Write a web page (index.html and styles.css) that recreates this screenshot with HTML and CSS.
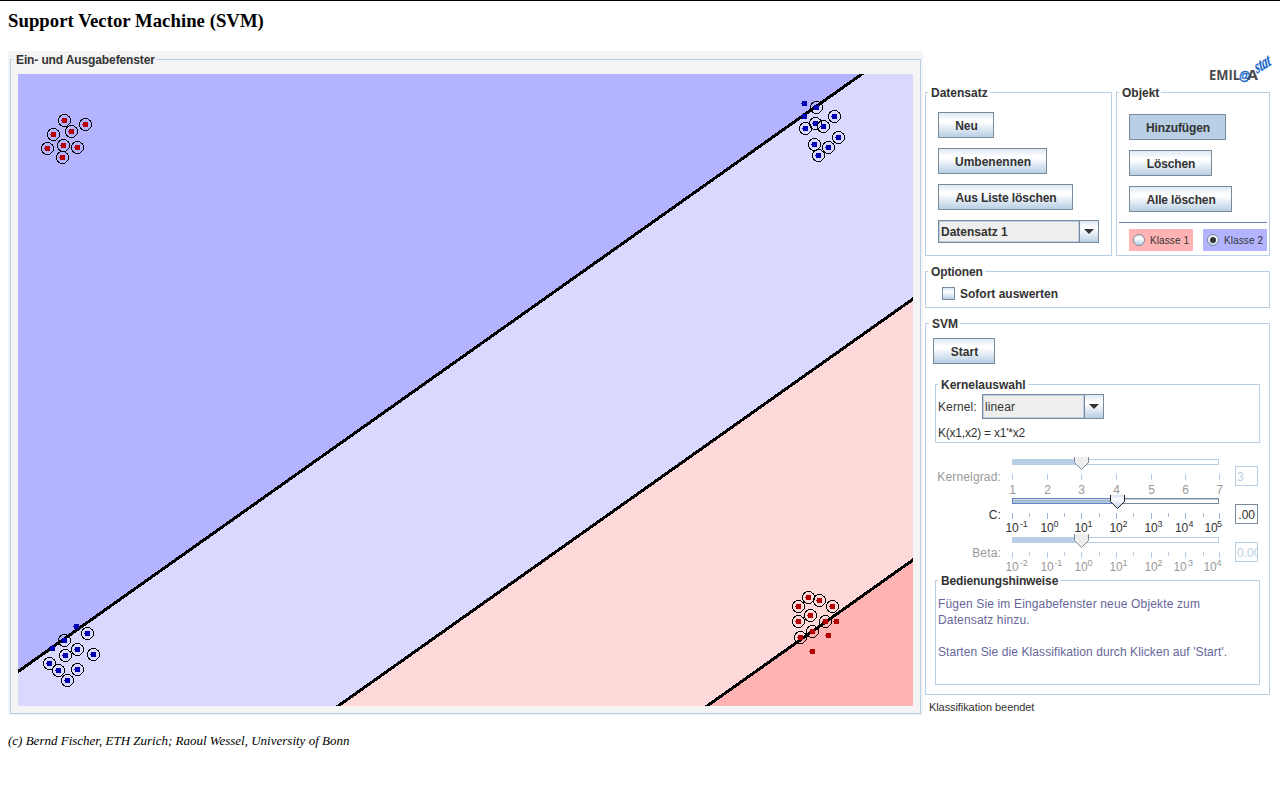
FILE: index.html
```html
<!DOCTYPE html>
<html lang="de">
<head>
<meta charset="utf-8">
<title>Support Vector Machine (SVM)</title>
<link rel="stylesheet" href="styles.css">
</head>
<body>
<h3 class="title">Support Vector Machine (SVM)</h3>
<main class="app">
  <section class="io">
    <div class="group io-group">
      <span class="legend tight">Ein- und Ausgabefenster</span>
      <svg class="plot" viewBox="18 74 895 632" width="895" height="632" shape-rendering="crispEdges">
        <defs>
          <g id="dot"><rect x="-2" y="-2" width="5" height="5"/><rect x="-3" y="0" width="1" height="1"/></g>
          <g id="sv"><circle cx=".5" cy=".5" r="6" fill="none" stroke="#000"/><use href="#dot"/></g>
        </defs>
        <rect x="18" y="74" width="895" height="632" fill="#d9d9ff"/>
        <path d="M18 74H862L18 672Z" fill="#b3b3ff"/>
        <path d="M913 299V706H338Z" fill="#ffd9d9"/>
        <path d="M913 560V706H707Z" fill="#ffb3b3"/>
        <path d="M16 673L864 72.500M336 707.500L915 297.500M705 707.500L915 558.500" stroke="#000" stroke-width="3" fill="none"/>
        <g fill="#b30000">
          <use href="#sv" x="64" y="120"/><use href="#sv" x="85" y="124"/><use href="#sv" x="53" y="134"/><use href="#sv" x="71" y="131"/>
          <use href="#sv" x="47" y="148"/><use href="#sv" x="63" y="145"/><use href="#sv" x="77" y="147"/><use href="#sv" x="62" y="157"/>
          <use href="#sv" x="808" y="597"/><use href="#sv" x="819" y="600"/><use href="#sv" x="798" y="606"/><use href="#sv" x="832" y="606"/>
          <use href="#sv" x="810" y="615"/><use href="#sv" x="798" y="621"/><use href="#sv" x="825" y="621"/><use href="#dot" x="836" y="621"/>
          <use href="#sv" x="812" y="631"/><use href="#sv" x="800" y="637"/><use href="#dot" x="828" y="635"/><use href="#dot" x="812" y="651"/>
        </g>
        <g fill="#0000b3">
          <use href="#dot" x="804" y="103"/><use href="#sv" x="816" y="107"/><use href="#dot" x="804" y="116"/><use href="#sv" x="834" y="116"/>
          <use href="#sv" x="805" y="128"/><use href="#sv" x="815" y="123"/><use href="#sv" x="823" y="126"/><use href="#sv" x="838" y="137"/>
          <use href="#sv" x="814" y="144"/><use href="#sv" x="828" y="147"/><use href="#sv" x="818" y="155"/>
          <use href="#dot" x="76" y="626"/><use href="#sv" x="87" y="633"/><use href="#sv" x="64" y="640"/><use href="#dot" x="52" y="648"/>
          <use href="#sv" x="77" y="649"/><use href="#sv" x="65" y="655"/><use href="#sv" x="93" y="654"/><use href="#sv" x="49" y="663"/>
          <use href="#sv" x="58" y="670"/><use href="#sv" x="77" y="669"/><use href="#sv" x="67" y="680"/>
        </g>
      </svg>
    </div>
  </section>

  <section class="controls">
    <header class="brand">
      <svg viewBox="1205 50 70 36" width="70" height="36">
        <g font-family="Open Sans, sans-serif" font-weight="bold" font-size="14" fill="#4a4a4c">
          <text x="1209" y="79" textLength="31" lengthAdjust="spacingAndGlyphs">EMIL</text>
          <text x="1247" y="79" textLength="11" lengthAdjust="spacingAndGlyphs">A</text>
        </g>
        <text x="1239" y="79" font-family="Liberation Sans, sans-serif" font-weight="bold" font-style="italic" font-size="13" fill="#1565c8" stroke="#1565c8" stroke-width=".4" textLength="11" lengthAdjust="spacingAndGlyphs">@</text>
        <text transform="translate(1257 72.500) rotate(-31) skewX(-12) scale(.8 1.1)" font-family="Liberation Serif, serif" font-style="italic" font-weight="bold" font-size="16" fill="#1565c8" stroke="#1565c8" stroke-width=".3" textLength="21" lengthAdjust="spacingAndGlyphs">stat</text>
      </svg>
    </header>

    <div class="top-row">
      <div class="group dataset">
        <span class="legend">Datensatz</span>
        <button class="btn b-neu">Neu</button>
        <button class="btn b-um">Umbenennen</button>
        <button class="btn b-aus">Aus Liste löschen</button>
        <div class="combo combo-data"><span class="combo-value">Datensatz 1</span><span class="combo-arrow"><svg width="10" height="5" viewBox="0 0 10 5"><path d="M0 0H10L5 5Z" fill="#333"/></svg></span></div>
      </div>
      <div class="group object">
        <span class="legend">Objekt</span>
        <button class="btn b-hin pressed">Hinzufügen</button>
        <button class="btn b-loe">Löschen</button>
        <button class="btn b-alle">Alle löschen</button>
        <div class="sep"></div>
        <div class="classes">
          <label class="class-opt c1"><span class="radio"></span><span class="class-name">Klasse 1</span></label>
          <label class="class-opt c2"><span class="radio on"></span><span class="class-name">Klasse 2</span></label>
        </div>
      </div>
    </div>

    <div class="group options">
      <span class="legend tight">Optionen</span>
      <label class="check"><span class="box"></span><span class="check-text">Sofort auswerten</span></label>
    </div>

    <div class="group svm">
      <span class="legend">SVM</span>
      <button class="btn b-start">Start</button>
      <div class="group kernel">
        <span class="legend">Kernelauswahl</span>
        <div class="kernel-row"><span class="kernel-label">Kernel:</span><div class="combo combo-kernel"><span class="combo-value">linear</span><span class="combo-arrow"><svg width="10" height="5" viewBox="0 0 10 5"><path d="M0 0H10L5 5Z" fill="#333"/></svg></span></div></div>
        <div class="formula">K(x1,x2) = x1'*x2</div>
      </div>

      <div class="sliders">
        <div class="slider-row off">
          <span class="slider-label">Kernelgrad:</span>
          <svg class="slider" viewBox="1002 457 228 38" width="228" height="38">
            <g shape-rendering="crispEdges">
              <rect x="1012.500" y="459.500" width="206" height="5" fill="#fff" stroke="#b8cfe5"/>
              <rect x="1012" y="459" width="64" height="5" fill="#b8cfe5"/>
              <path d="M1012.500 474v6M1047.500 474v6M1081.500 474v6M1116.500 474v6M1151.500 474v6M1185.500 474v6M1219.500 474v6" stroke="#b8cfe5"/>
            </g>
            <path d="M1074.500 457V462.500L1081.500 469.500L1088.500 462.500V457" fill="#eee" stroke="#7a8a99"/>
            <g class="tick-label"><text x="1012.500" y="494">1</text><text x="1047.500" y="494">2</text><text x="1081.500" y="494">3</text><text x="1116.500" y="494">4</text><text x="1151.500" y="494">5</text><text x="1185.500" y="494">6</text><text x="1219.500" y="494">7</text></g>
          </svg>
          <span class="field">3</span>
        </div>
        <div class="slider-row">
          <span class="slider-label">C:</span>
          <svg class="slider" viewBox="1002 495 228 38" width="228" height="38">
            <defs>
              <linearGradient id="fill" x2="0" y2="1"><stop offset="0" stop-color="#fff"/><stop offset=".4" stop-color="#a3b8cc"/><stop offset="1" stop-color="#b8cfe5"/></linearGradient>
              <linearGradient id="thumb" x2="0" y2="1"><stop offset="0" stop-color="#d0e0f0"/><stop offset=".3" stop-color="#fff"/><stop offset="1" stop-color="#b8cfe5"/></linearGradient>
            </defs>
            <g shape-rendering="crispEdges">
              <rect x="1012.500" y="498.500" width="206" height="5" fill="#fff" stroke="#7a8a99"/>
              <path d="M1013 499.500H1218" stroke="#b8cfe5"/>
              <rect x="1012.500" y="498.500" width="100" height="5" fill="url(#fill)" stroke="#6382bf"/>
              <path d="M1012.500 513v6M1047.500 513v6M1081.500 513v6M1116.500 513v6M1151.500 513v6M1185.500 513v6M1219.500 513v6M1029.500 513v4M1064.500 513v4M1099.500 513v4M1133.500 513v4M1168.500 513v4M1203.500 513v4" stroke="#a3b8cc"/>
            </g>
            <path d="M1110.500 495V501.500L1117.500 508.500L1124.500 501.500V495" fill="url(#thumb)" stroke="#222"/>
            <g class="pow"><text x="1005.500" y="532">10<tspan dx="1.500" dy="-5">-1</tspan></text><text x="1040.500" y="532">10<tspan dy="-5">0</tspan></text><text x="1074.500" y="532">10<tspan dy="-5">1</tspan></text><text x="1109.500" y="532">10<tspan dy="-5">2</tspan></text><text x="1144.500" y="532">10<tspan dy="-5">3</tspan></text><text x="1175" y="532">10<tspan dx=".5" dy="-5">4</tspan></text><text x="1204.500" y="532">10<tspan dx="-.5" dy="-5">5</tspan></text></g>
          </svg>
          <span class="field"><span>.00</span></span>
        </div>
        <div class="slider-row off">
          <span class="slider-label">Beta:</span>
          <svg class="slider" viewBox="1002 533 228 38" width="228" height="38">
            <g shape-rendering="crispEdges">
              <rect x="1012.500" y="537.500" width="206" height="5" fill="#fff" stroke="#b8cfe5"/>
              <rect x="1012" y="537" width="64" height="5" fill="#b8cfe5"/>
              <path d="M1012.500 552v6M1047.500 552v6M1081.500 552v6M1116.500 552v6M1151.500 552v6M1185.500 552v6M1219.500 552v6M1029.500 552v4M1064.500 552v4M1099.500 552v4M1133.500 552v4M1168.500 552v4M1203.500 552v4" stroke="#b8cfe5"/>
            </g>
            <path d="M1074.500 534V540.500L1081.500 547.500L1088.500 540.500V534" fill="#eee" stroke="#7a8a99"/>
            <g class="pow"><text x="1005.500" y="571">10<tspan dx="1.500" dy="-5">-2</tspan></text><text x="1040.500" y="571">10<tspan dx="1" dy="-5">-1</tspan></text><text x="1074.500" y="571">10<tspan dy="-5">0</tspan></text><text x="1109.500" y="571">10<tspan dy="-5">1</tspan></text><text x="1144.500" y="571">10<tspan dy="-5">2</tspan></text><text x="1173.500" y="571">10<tspan dx="1.500" dy="-5">3</tspan></text><text x="1203.500" y="571">10<tspan dy="-5">4</tspan></text></g>
          </svg>
          <span class="field">0.00</span>
        </div>
      </div>

      <div class="group hints">
        <span class="legend tight">Bedienungshinweise</span>
        <p class="hint hint-add">Fügen Sie im Eingabefenster neue Objekte zum<br>Datensatz hinzu.</p>
        <p class="hint">Starten Sie die Klassifikation durch Klicken auf 'Start'.</p>
      </div>
    </div>
    <div class="status">Klassifikation beendet</div>
  </section>
</main>
<footer class="copyright">(c) Bernd Fischer, ETH Zurich; Raoul Wessel, University of Bonn</footer>
</body>
</html>
```
FILE: styles.css
```css
* { box-sizing: border-box; }
html { background: #fff; }
body {
  margin: 0;
  height: 800px;
  padding: 0 8px;
  border-top: 1px solid #000;
  font: 12px/14px "Liberation Sans", Arial, sans-serif;
  color: #333;
  overflow: hidden;
}
.title {
  margin: 0;
  height: 50px;
  padding-top: 9px;
  font: bold 18.72px/22px "Liberation Serif", "Times New Roman", serif;
  letter-spacing: .04px;
  color: #000;
}
.app { display: flex; height: 664px; }

.group { display: flex; flex-direction: column; align-items: flex-start; border: 1px solid #b8cfe5; }
.legend {
  flex: none;
  height: 14px;
  margin: -8px 0 0 2px;
  padding: 0 2px 0 3px;
  background: #fff;
  font-weight: bold;
  line-height: 16px;
  white-space: nowrap;
}
.tight { letter-spacing: -.12px; }

.io { width: 915px; padding: 8px 2px 1px; background: #f4f4f4; }
.io-group { height: 655px; width: 911px; }
.io .legend { background: #f4f4f4; }
.plot { display: block; margin: 8px 0 0 7px; }

.controls { width: 345px; margin-left: 2px; display: flex; flex-direction: column; }
.brand { height: 41px; flex: none; display: flex; justify-content: flex-end; margin-right: -5px; }
.top-row { display: flex; gap: 4px; height: 164px; flex: none; }
.dataset { width: 187px; }
.object { width: 154px; }

.btn {
  flex: none;
  height: 26px;
  margin: 0 0 10px 12px;
  padding: 2px 0 0 1px;
  border: 1px solid #7a8a99;
  border-radius: 0;
  background: linear-gradient(#dde8f3, #fff 30%, #fff 38%, #b8cfe5);
  font: bold 12px/22px "Liberation Sans", Arial, sans-serif;
  color: #333;
  white-space: nowrap;
}
.pressed { background: #b8cfe5; }
.b-neu { width: 56px; margin-top: 13px; }
.b-um { width: 109px; }
.b-aus { width: 135px; letter-spacing: -.09px; }
.b-hin { width: 97px; margin-top: 15px; letter-spacing: -.15px; }
.b-loe { width: 83px; letter-spacing: -.1px; }
.b-alle { width: 103px; letter-spacing: -.12px; }
.b-start { width: 62px; margin: 8px 0 20px 7px; }

.combo { display: flex; flex: none; border: 1px solid #7a8a99; background: #eee; }
.combo-value { flex: 1; border: 1px solid #b8cfe5; padding-left: 1px; }
.combo-arrow {
  width: 19px;
  border-left: 1px solid #7a8a99;
  background: linear-gradient(#dde8f3, #fff 30%, #fff 38%, #b8cfe5);
  display: flex;
  align-items: center;
  justify-content: center;
}
.combo-data { width: 161px; height: 23px; margin-left: 12px; font-weight: bold; line-height: 20px; }
.combo-kernel { width: 122px; height: 25px; line-height: 22px; letter-spacing: .12px; }

.sep { width: 148px; height: 1px; background: #6382bf; flex: none; margin-left: 2px; }
.classes { display: flex; gap: 10px; margin: 6px 0 0 12px; }
.class-opt {
  display: flex;
  align-items: center;
  width: 64px;
  height: 22px;
  padding-left: 4px;
  gap: 5px;
  font-size: 10px;
  white-space: nowrap;
}
.class-name { padding-top: 2px; letter-spacing: .1px; }
.c1 { background: #ffb3b3; }
.c2 { background: #b3b3ff; }
.radio {
  width: 12px;
  height: 12px;
  flex: none;
  border: 1px solid #7a8a99;
  border-radius: 50%;
  background: linear-gradient(#dde8f3, #fff 35%, #b8cfe5);
  display: flex;
  align-items: center;
  justify-content: center;
}
.radio.on::after { content: ""; width: 6px; height: 6px; border-radius: 50%; background: #333; }

.options { height: 37px; flex: none; margin-top: 15px; }
.check { display: flex; align-items: center; gap: 5px; height: 14px; margin: 8px 0 0 16px; font-weight: bold; }
.check-text { padding-top: 2px; }
.box { width: 13px; height: 13px; border: 1px solid #7a8a99; background: linear-gradient(#dde8f3, #fff 35%, #b8cfe5); }

.svm { height: 372px; flex: none; margin-top: 15px; }
.svm > .legend { margin-left: 3px; }
.kernel { width: 325px; height: 59px; margin-left: 9px; flex: none; }
.kernel-row { display: flex; align-items: center; margin: 3px 0 0 2px; }
.kernel-label { width: 44px; letter-spacing: .1px; }
.formula { margin: 7px 0 0 2px; letter-spacing: -.22px; }

.sliders { margin: 14px 0 0 9px; flex: none; }
.slider-row { display: flex; height: 38px; align-items: center; }
.slider-label { width: 66px; text-align: right; padding-top: 2px; letter-spacing: .15px; white-space: nowrap; }
.slider { display: block; margin-left: 1px; overflow: visible; flex: none; }
.slider text { font-size: 12px; fill: #333; }
.tick-label { text-anchor: middle; }
.pow text { letter-spacing: -.2px; }
.pow tspan { font-size: 9px; }
.off { color: #999; }
.off .slider text { fill: #999; }
.field {
  width: 23px;
  height: 20px;
  margin-left: 5px;
  border: 1px solid #7a8a99;
  padding: 0 1px;
  line-height: 20px;
  overflow: hidden;
  white-space: nowrap;
  display: flex;
  justify-content: flex-end;
}
.field > span { margin-right: 1px; }
.off .field { border-color: #b8cfe5; color: #b8cfe5; justify-content: flex-start; }

.hints { width: 325px; height: 105px; margin: 9px 0 0 9px; flex: none; }
.hint { margin: 9px 0 7px 2px; line-height: 16px; letter-spacing: .09px; color: #666699; white-space: nowrap; }
.hint-add { letter-spacing: .15px; }
.hint + .hint { margin-top: 9px; }

.status { margin: 5px 0 0 4px; font-size: 11px; letter-spacing: -.08px; }
.copyright {
  margin-top: 18px;
  font: italic 13px/16px "Liberation Serif", "Times New Roman", serif;
  color: #000;
}
```
